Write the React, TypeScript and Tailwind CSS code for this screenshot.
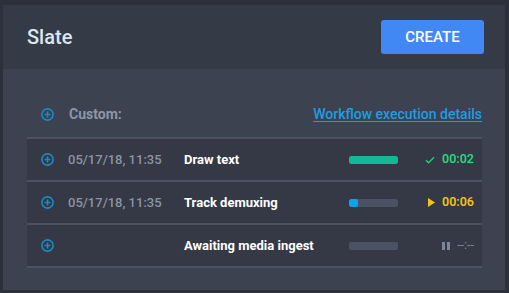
import React from "react";

type Row = {
  date: string;
  name: string;
  progress: number;
  barColor: string;
  status: "done" | "running" | "waiting";
  time: string;
};

const rows: Row[] = [
  { date: "05/17/18, 11:35", name: "Draw text", progress: 100, barColor: "#13b894", status: "done", time: "00:02" },
  { date: "05/17/18, 11:35", name: "Track demuxing", progress: 18, barColor: "#0aa3f0", status: "running", time: "00:06" },
  { date: "", name: "Awaiting media ingest", progress: 0, barColor: "#0aa3f0", status: "waiting", time: "--:--" },
];

function PlusCircle() {
  return (
    <svg width="13" height="13" viewBox="0 0 13 13" fill="none" stroke="#1b8bc6" strokeWidth="1.6">
      <circle cx="6.5" cy="6.5" r="5.6" />
      <path d="M6.5 3.6v5.8M3.6 6.5h5.8" />
    </svg>
  );
}

function StatusIcon({ status }: { status: Row["status"] }) {
  if (status === "done") {
    return (
      <svg width="10" height="8" viewBox="0 0 10 8" fill="none" stroke="#27c97a" strokeWidth="1.4">
        <path d="M1 4.2l2.6 2.6L9 1.2" />
      </svg>
    );
  }
  if (status === "running") {
    return (
      <svg width="7" height="9" viewBox="0 0 7 9" fill="#f2c21b">
        <path d="M0 0l7 4.5L0 9z" />
      </svg>
    );
  }
  return (
    <div className="flex gap-[2px]">
      <div className="w-[3px] h-[8px] bg-[#7d8698]" />
      <div className="w-[3px] h-[8px] bg-[#7d8698]" />
    </div>
  );
}

const timeColor: Record<Row["status"], string> = {
  done: "text-[#27d67f] font-semibold",
  running: "text-[#f2c21b] font-semibold",
  waiting: "text-[#7d879a] font-normal",
};

export default function App() {
  return (
    <div className="w-[509px] h-[293px] bg-[#2b303b] pt-[5px] pl-[3px] pr-[4px] pb-[3px] font-['Roboto',sans-serif]">
      <div className="flex flex-col h-full">
        {/* Header */}
        <div className="h-[64px] bg-[#353a47] flex items-center justify-between pl-[24px] pr-[21px]">
          <h1 className="text-[20px] font-medium text-[#dde5ee]">Slate</h1>
          <button className="w-[103px] h-[34px] rounded-[3px] bg-[#4288f5] text-white text-[15px] font-medium">
            CREATE
          </button>
        </div>

        {/* Body */}
        <div className="flex-1 bg-[#3c4250] pt-[22px] pl-[24px] pr-[23px]">
          <div className="h-[48px] flex items-center pl-[14px] border-b-2 border-[#4b5262]">
            <PlusCircle />
            <span className="ml-[15px] text-[14px] font-bold text-[#8d96a5]">Custom:</span>
            <a href="#" className="ml-auto text-[14px] font-medium text-[#1d9de3] underline underline-offset-2">
              Workflow execution details
            </a>
          </div>

          {rows.map((r, i) => (
            <div key={i} className="h-[43px] flex items-center pl-[14px] bg-[#343945] border-b-2 border-[#4b5262]">
              <PlusCircle />
              <span className="ml-[14px] w-[116px] text-[13px] font-medium text-[#8b94a3]">{r.date}</span>
              <span className="flex-1 text-[13px] font-bold text-white">{r.name}</span>
              <div className="w-[49px] h-[8px] rounded-[2px] bg-[#4b5263] overflow-hidden">
                <div className="h-full rounded-[2px]" style={{ width: `${r.progress}%`, backgroundColor: r.barColor }} />
              </div>
              <div className="w-[84px] pr-[8px] flex items-center justify-end gap-[7px]">
                <StatusIcon status={r.status} />
                <span className={`text-[12.5px] ${timeColor[r.status]}`}>{r.time}</span>
              </div>
            </div>
          ))}
        </div>
      </div>
    </div>
  );
}
